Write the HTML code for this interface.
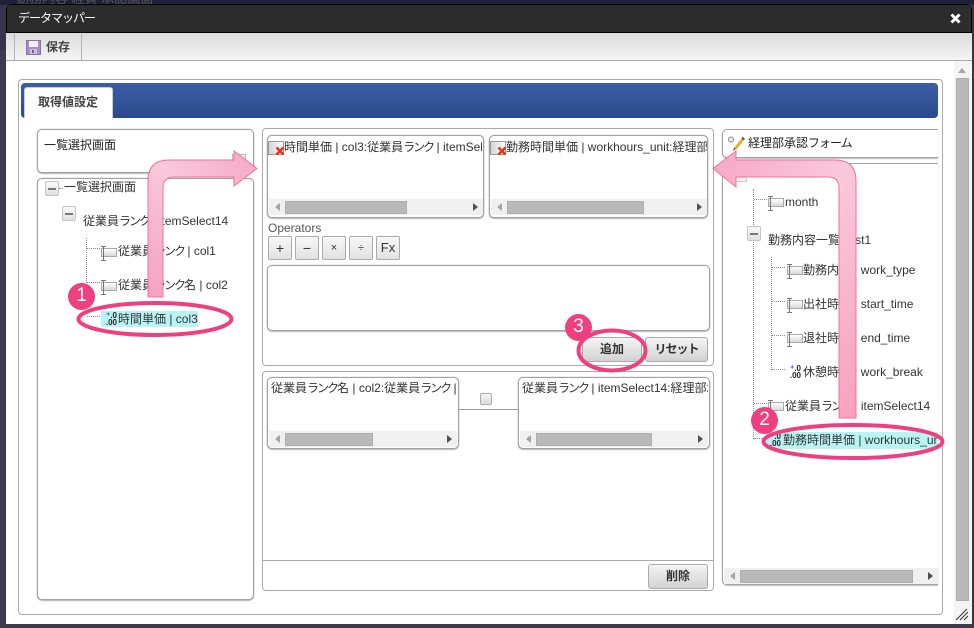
<!DOCTYPE html>
<html lang="ja"><head><meta charset="utf-8"><title>データマッパー</title>
<style>
html,body{margin:0;padding:0;width:974px;height:628px;overflow:hidden;background:#34344a}
*{box-sizing:border-box}
body{font-family:"Liberation Sans","Noto Sans CJK JP",sans-serif;font-size:12px;color:#333;position:relative}
.a{position:absolute}
.t{position:absolute;white-space:nowrap;line-height:16px;height:16px;font-size:12px;color:#333}
.k{letter-spacing:-2px}
.f{letter-spacing:-1px}
.box{position:absolute;background:#fff;border:1px solid #a2a2a2;border-radius:5px;box-shadow:0 0 1px #999,0 1px 1px #bbb}
.sh{position:absolute;background:#fff;border:1px solid #aaa;border-radius:4px}
.clip{position:absolute;overflow:hidden}
.sb{position:absolute;height:16px;background:#f0f0f0}
.sb i{position:absolute;top:2px;height:13px;background:#b9b9b9;border:1px solid #adadad}
.sb b{position:absolute;top:4px;width:0;height:0;border-top:4px solid transparent;border-bottom:4px solid transparent}
.sb b.l{left:6px;border-right:5px solid #a3a3a3}
.sb b.r{right:5px;border-left:5px solid #505050}
.op{position:absolute;top:236px;width:24px;height:24px;border:1px solid #aaa;border-radius:2px;background:linear-gradient(#f8f8f8,#e2e2e2);text-align:center;line-height:22px;color:#333}
.btn{position:absolute;border:1px solid #aaa;border-radius:3px;background:linear-gradient(#f4f4f4,#d2d2d2);text-align:center;font-weight:bold;color:#333;font-size:12px;line-height:23px}
.min{position:absolute;width:14px;height:15px;border:1px solid #c4c4c4;border-radius:2px;background:linear-gradient(#fafafa,#e0e0e0)}
.min:after{content:"";position:absolute;left:2px;top:6px;width:8px;height:2px;background:#777}
.dv{position:absolute;width:0;border-left:1px dotted #888}
.dh{position:absolute;height:0;border-top:1px dotted #888}
.ti{position:absolute;width:16px;height:9px;border:1px solid #aaa;background:linear-gradient(#fff,#d8d8d8)}
.ti:before{content:"";position:absolute;left:-1px;top:-3px;width:5px;height:13px;border-top:1px solid #777;border-bottom:1px solid #777;background:linear-gradient(#777,#777) center/1px 100% no-repeat}
.num{position:absolute;width:16px;height:16px;font:bold 8px/7px "Liberation Sans",sans-serif;color:#222;text-align:right}
.num u{text-decoration:none;color:#2a50c8}
.chk{position:absolute;width:16px;height:14px;border:1px solid #999;background:linear-gradient(90deg,#d4d4d4,#fff)}
.chk svg{position:absolute;left:6px;top:4px}
.badge{position:absolute;width:27px;height:27px;border-radius:50%;background:#ee4081;color:#fff;text-align:center;font-size:19px;line-height:26px}
</style></head><body>

<!-- dimmed page behind -->
<div class="a" style="left:0;top:0;width:974px;height:5px;background:#1f1f3a"></div>
<div class="t" style="left:16px;top:-9px;color:#555;font-size:13px">勤務内容 経費 承認画面</div>
<div class="a" style="left:0;top:50px;width:6px;height:578px;background:#3b3b4d"></div>
<div class="a" style="left:0;top:624px;width:974px;height:4px;background:#3d3d50"></div>

<!-- dialog -->
<div class="a" style="left:6px;top:4px;width:966px;height:620px;background:#fff;border-radius:4px 4px 0 0;overflow:hidden">
  <div class="a" style="left:0;top:0;width:966px;height:29px;background:#2c2c2c;border:1px solid #000;border-radius:4px 4px 0 0"></div>
  <div class="a" style="left:0;top:29px;width:966px;height:28px;background:linear-gradient(#dcdcdc,#f4f4f4);border-bottom:1px solid #aaa"></div>
  <div class="a" style="left:8px;top:29px;width:1px;height:28px;background:#b5b5b5"></div>
  <div class="a" style="left:75px;top:29px;width:1px;height:28px;background:#b5b5b5"></div>
  <div class="a" style="left:948px;top:57px;width:18px;height:563px;background:#f4f4f4"></div>
  <div class="a" style="left:950px;top:74px;width:13px;height:523px;background:#b9b9b9;border:1px solid #adadad"></div>
  <div class="a" style="left:952px;top:64px;width:0;height:0;border-left:4px solid transparent;border-right:4px solid transparent;border-bottom:5px solid #a3a3a3"></div>
</div>
<div class="t" style="left:18px;top:10px;color:#fff;font-size:12px;letter-spacing:-1px">データマッパー</div>
<svg class="a" style="left:950px;top:13px" width="11" height="11" viewBox="0 0 11 11"><path d="M1.5 1.5L9.5 9.5M9.5 1.5L1.5 9.5" stroke="#fff" stroke-width="3"/></svg>
<svg class="a" style="left:26px;top:39px" width="15" height="16" viewBox="0 0 15 16"><path d="M.5 1.5h14v14h-14z" fill="#a88cc4" stroke="#8c70ac"/><rect x="3" y="2" width="9" height="6" fill="#f0f0f0"/><rect x="4" y="10" width="7" height="5" fill="#ccc4d8"/><rect x="6" y="11" width="2" height="3" fill="#7a5a9a"/></svg>
<div class="t" style="left:46px;top:39px;font-weight:bold;color:#444">保存</div>

<!-- main panel -->
<div class="a" style="left:18px;top:79px;width:925px;height:536px;border:1px solid #aaa;border-radius:4px;background:#fff"></div>
<div class="a" style="left:21px;top:83px;width:917px;height:35px;border-radius:4px;background:linear-gradient(#3a5ea6,#2b4a8b)"></div>
<div class="a" style="left:24px;top:87px;width:89px;height:31px;background:#fff;border:1px solid #ccc;border-bottom:0;border-radius:3px 3px 0 0"></div>
<div class="t" style="left:38px;top:94px;font-weight:bold;color:#444">取得値設定</div>

<!-- left column -->
<div class="box" style="left:37px;top:129px;width:217px;height:44px"></div>
<div class="t" style="left:44px;top:137px;color:#222">一覧選択画面</div>
<div class="a" style="left:232px;top:154px;width:14px;height:14px;border:1px solid #bbb;background:#eee"></div>
<div class="box" style="left:37px;top:178px;width:217px;height:422px"></div>
<div class="min" style="left:45px;top:181px"></div>
<div class="dh" style="left:59px;top:188px;width:4px"></div>
<div class="t" style="left:64px;top:179px">一覧選択画面</div>
<div class="min" style="left:62px;top:206px"></div>
<div class="t" style="left:83px;top:213px">従業員<span class="k">ランク</span> | itemSelect14</div>
<div class="dv" style="left:86px;top:238px;height:45px"></div>
<div class="dh" style="left:87px;top:248px;width:13px"></div>
<div class="dh" style="left:87px;top:282px;width:13px"></div>
<div class="dh" style="left:87px;top:316px;width:13px"></div>
<div class="ti" style="left:101px;top:248px"></div>
<div class="t" style="left:118px;top:243px">従業員<span class="k">ランク</span> | col1</div>
<div class="ti" style="left:101px;top:282px"></div>
<div class="t" style="left:118px;top:277px">従業員<span class="k">ランク</span>名 | col2</div>
<div class="a" style="left:101px;top:311px;width:97px;height:16px;background:#b9f4f4"></div>
<div class="num" style="left:101px;top:312px"><u>⁺</u>.0<br>.00</div>
<div class="t" style="left:118px;top:311px">時間単価 | col3</div>

<!-- center top -->
<div class="sh" style="left:262px;top:128px;width:452px;height:238px"></div>
<div class="box" style="left:267px;top:135px;width:217px;height:83px"></div>
<div class="clip" style="left:268px;top:137px;width:215px;height:79px">
  <div class="chk" style="left:0;top:4px"><svg width="10" height="10" viewBox="0 0 10 10"><path d="M1.5 1.5L8.5 8.5M8.5 1.500L1.5 8.5" stroke="#e8341c" stroke-width="2.6"/></svg></div>
  <div class="t" style="left:16px;top:2px;width:198px;overflow:hidden">時間単価 | col3:従業員<span class="k">ランク</span> | itemSelect14</div>
  <div class="sb" style="left:1px;top:62px;width:214px"><b class="l"></b><i style="left:16px;width:122px"></i><b class="r"></b></div>
</div>
<div class="box" style="left:489px;top:135px;width:219px;height:83px"></div>
<div class="clip" style="left:490px;top:137px;width:217px;height:79px">
  <div class="chk" style="left:0;top:4px"><svg width="10" height="10" viewBox="0 0 10 10"><path d="M1.5 1.5L8.5 8.5M8.5 1.500L1.5 8.5" stroke="#e8341c" stroke-width="2.6"/></svg></div>
  <div class="t" style="left:16px;top:2px;width:201px;overflow:hidden">勤務時間単価 | workhours_unit:経理部承認フォーム</div>
  <div class="sb" style="left:1px;top:62px;width:216px"><b class="l"></b><i style="left:16px;width:137px"></i><b class="r"></b></div>
</div>
<div class="t" style="left:268px;top:220px;color:#555">Operators</div>
<div class="op" style="left:268px;font-size:14px">+</div>
<div class="op" style="left:295px;font-size:14px">−</div>
<div class="op" style="left:322px;font-size:11px">×</div>
<div class="op" style="left:349px;font-size:11px">÷</div>
<div class="op" style="left:376px;font-size:13px">Fx</div>
<div class="box" style="left:267px;top:265px;width:443px;height:66px"></div>
<div class="btn" style="left:582px;top:337px;width:60px;height:25px">追加</div>
<div class="btn" style="left:645px;top:337px;width:63px;height:25px"><span class="f">リセット</span></div>

<!-- center bottom -->
<div class="sh" style="left:262px;top:371px;width:452px;height:220px"></div>
<div class="a" style="left:458px;top:409px;width:61px;height:1px;background:#999"></div>
<div class="a" style="left:480px;top:393px;width:12px;height:12px;border:1px solid #aaa;border-radius:2px;background:linear-gradient(#f4f4f4,#dcdcdc)"></div>
<div class="box" style="left:267px;top:377px;width:192px;height:72px"></div>
<div class="clip" style="left:269px;top:379px;width:188px;height:69px">
  <div class="t" style="left:2px;top:1px">従業員<span class="k">ランク</span>名 | col2:従業員<span class="k">ランク</span> | itemSelect14</div>
  <div class="sb" style="left:0;top:52px;width:188px"><b class="l"></b><i style="left:16px;width:88px"></i><b class="r"></b></div>
</div>
<div class="box" style="left:518px;top:377px;width:192px;height:72px"></div>
<div class="clip" style="left:520px;top:379px;width:188px;height:69px">
  <div class="t" style="left:2px;top:1px">従業員<span class="k">ランク</span> | itemSelect14:経理部承認フォーム</div>
  <div class="sb" style="left:0;top:52px;width:188px"><b class="l"></b><i style="left:16px;width:116px"></i><b class="r"></b></div>
</div>
<div class="a" style="left:263px;top:560px;width:450px;height:1px;background:#aaa"></div>
<div class="btn" style="left:648px;top:564px;width:60px;height:25px">削除</div>

<!-- right column -->
<div class="a" style="left:722px;top:129px;width:216px;height:29px;background:#fff;border:1px solid #a2a2a2;border-right:0;border-radius:5px 0 0 5px;box-shadow:0 1px 1px #bbb"></div>
<svg class="a" style="left:728px;top:136px" width="17" height="15" viewBox="0 0 17 15"><circle cx="3" cy="3.500" r="2.500" fill="#eee" stroke="#888"/><path d="M7 13L15 3" stroke="#e0b030" stroke-width="3"/><path d="M14 1.500L16.500 3.500" stroke="#444" stroke-width="1.500"/><path d="M5.500 14.500L7 12" stroke="#333"/></svg>
<div class="t" style="left:748px;top:135px;color:#222">経理部承認<span class="f">フォーム</span></div>
<div class="a" style="left:722px;top:163px;width:216px;height:422px;background:#fff;border:1px solid #a2a2a2;border-right:0;border-radius:5px 0 0 5px;box-shadow:0 1px 1px #bbb"></div>
<div class="a" style="left:733px;top:170px;width:14px;height:12px;border:1px solid #ccc;background:#eee"></div>
<div class="dv" style="left:753px;top:189px;height:250px"></div>
<div class="dh" style="left:754px;top:199px;width:13px"></div>
<div class="ti" style="left:768px;top:198px"></div>
<div class="t" style="left:785px;top:194px">month</div>
<div class="min" style="left:747px;top:226px"></div>
<div class="t" style="left:768px;top:232px">勤務内容一覧 | list1</div>
<div class="dv" style="left:771px;top:257px;height:113px"></div>
<div class="dh" style="left:772px;top:267px;width:13px"></div>
<div class="ti" style="left:787px;top:266px"></div>
<div class="t" style="left:803px;top:262px">勤務内容 | work_type</div>
<div class="dh" style="left:772px;top:301px;width:13px"></div>
<div class="ti" style="left:787px;top:300px"></div>
<div class="t" style="left:803px;top:296px">出社時刻 | start_time</div>
<div class="dh" style="left:772px;top:335px;width:13px"></div>
<div class="ti" style="left:787px;top:334px"></div>
<div class="t" style="left:803px;top:330px">退社時刻 | end_time</div>
<div class="dh" style="left:772px;top:369px;width:13px"></div>
<div class="num" style="left:785px;top:365px"><u>⁺</u>.0<br>.00</div>
<div class="t" style="left:803px;top:364px">休憩時間 | work_break</div>
<div class="dh" style="left:754px;top:403px;width:13px"></div>
<div class="ti" style="left:768px;top:402px"></div>
<div class="t" style="left:785px;top:398px">従業員<span class="k">ランク</span> | itemSelect14</div>
<div class="dh" style="left:754px;top:438px;width:12px"></div>
<div class="clip" style="left:766px;top:432px;width:172px;height:17px;background:#b9f4f4">
  <div class="num" style="left:-1px;top:1px">.0<br>.00</div>
  <div class="t" style="left:17px;top:0">勤務時間単価 | workhours_unit</div>
</div>
<div class="sb" style="left:724px;top:568px;width:214px"><b class="l"></b><i style="left:16px;width:173px"></i><b class="r"></b></div>

<!-- resize grip -->
<svg class="a" style="left:955px;top:608px" width="14" height="13" viewBox="0 0 14 13"><path d="M1 12L12 1M5 12L13 4M9 12L13 8" stroke="#333" stroke-width="1"/></svg>

<!-- annotation overlay -->
<svg class="a" style="left:0;top:0" width="974" height="628" viewBox="0 0 974 628">
  <defs>
    <linearGradient id="g1" x1="0" y1="1" x2="1" y2="0"><stop offset="0" stop-color="#f5a0bf"/><stop offset=".5" stop-color="#f9c9da"/><stop offset="1" stop-color="#f6a8c4"/></linearGradient>
    <linearGradient id="g2" x1="0" y1="0" x2="1" y2="1"><stop offset="0" stop-color="#f6a8c4"/><stop offset=".5" stop-color="#f9c9da"/><stop offset="1" stop-color="#f5a0bf"/></linearGradient>
  </defs>
  <path d="M148 297V181Q148 160 169 160H234V151L257 168.500L234 186V177H174Q163 177 163 188V297Z" fill="url(#g1)" stroke="#f0709c"/>
  <path d="M856 418V181Q856 160 835 160H736V151L713 168.500L736 187V177H828Q839 177 839 188V418Z" fill="url(#g2)" stroke="#f0709c"/>
  <ellipse cx="155" cy="319" rx="76.500" ry="16" fill="none" stroke="#ee4081" stroke-width="4"/>
  <ellipse cx="853" cy="441.500" rx="89.500" ry="16.500" fill="none" stroke="#ee4081" stroke-width="4"/>
  <ellipse cx="612" cy="350.500" rx="33.500" ry="20" fill="none" stroke="#ee4081" stroke-width="4"/>
</svg>
<div class="badge" style="left:68px;top:283px">1</div>
<div class="badge" style="left:751px;top:407px">2</div>
<div class="badge" style="left:565px;top:314px">3</div>
</body></html>
